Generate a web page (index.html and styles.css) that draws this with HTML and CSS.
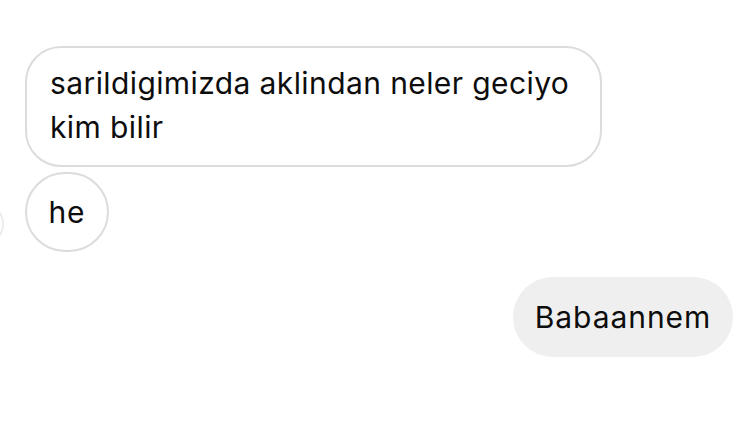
FILE: index.html
```html
<!DOCTYPE html>
<html>
<head>
<meta charset="utf-8">
<link rel="stylesheet" href="styles.css">
</head>
<body>
<div class="chat">
  <div class="row in">
    <div class="bubble received wide">sarildigimizda aklindan neler geciyo kim bilir</div>
  </div>
  <div class="row in">
    <span class="avatar-edge"></span>
    <div class="bubble received round">he</div>
  </div>
  <div class="row out">
    <div class="bubble sent">Babaannem</div>
  </div>
</div>
</body>
</html>
```
FILE: styles.css
```css
html, body {
  margin: 0;
  padding: 0;
  background: #ffffff;
}
body {
  font-family: "Inter", "Liberation Sans", sans-serif;
  color: #0d0d0d;
  width: 749px;
  height: 421px;
  overflow: hidden;
}
.chat {
  display: flex;
  flex-direction: column;
  padding-top: 46px;
}
.row {
  display: flex;
  position: relative;
}
.row.in {
  padding-left: 25px;
}
.row.out {
  justify-content: flex-end;
  padding-right: 16px;
  margin-top: 25px;
}
.row.in + .row.in {
  margin-top: 5px;
}
.bubble {
  box-sizing: border-box;
  font-size: 30px;
  line-height: 44px;
  letter-spacing: 0.95px;
}
.received {
  border: 2px solid #dcdcdc;
  background: #ffffff;
}
.wide {
  width: 577px;
  padding: 13px 8px 16px 23px;
  border-radius: 36px;
  letter-spacing: 0.4px;
}
.round {
  height: 80px;
  width: 84px;
  border-radius: 40px;
  display: flex;
  align-items: center;
  justify-content: center;
}
.sent {
  background: #efefef;
  height: 80px;
  width: 220px;
  border-radius: 40px;
  display: flex;
  align-items: center;
  justify-content: center;
}
.avatar-edge {
  position: absolute;
  left: -40px;
  top: 30px;
  width: 40px;
  height: 40px;
  border: 2px solid #ececec;
  border-radius: 50%;
}
```
